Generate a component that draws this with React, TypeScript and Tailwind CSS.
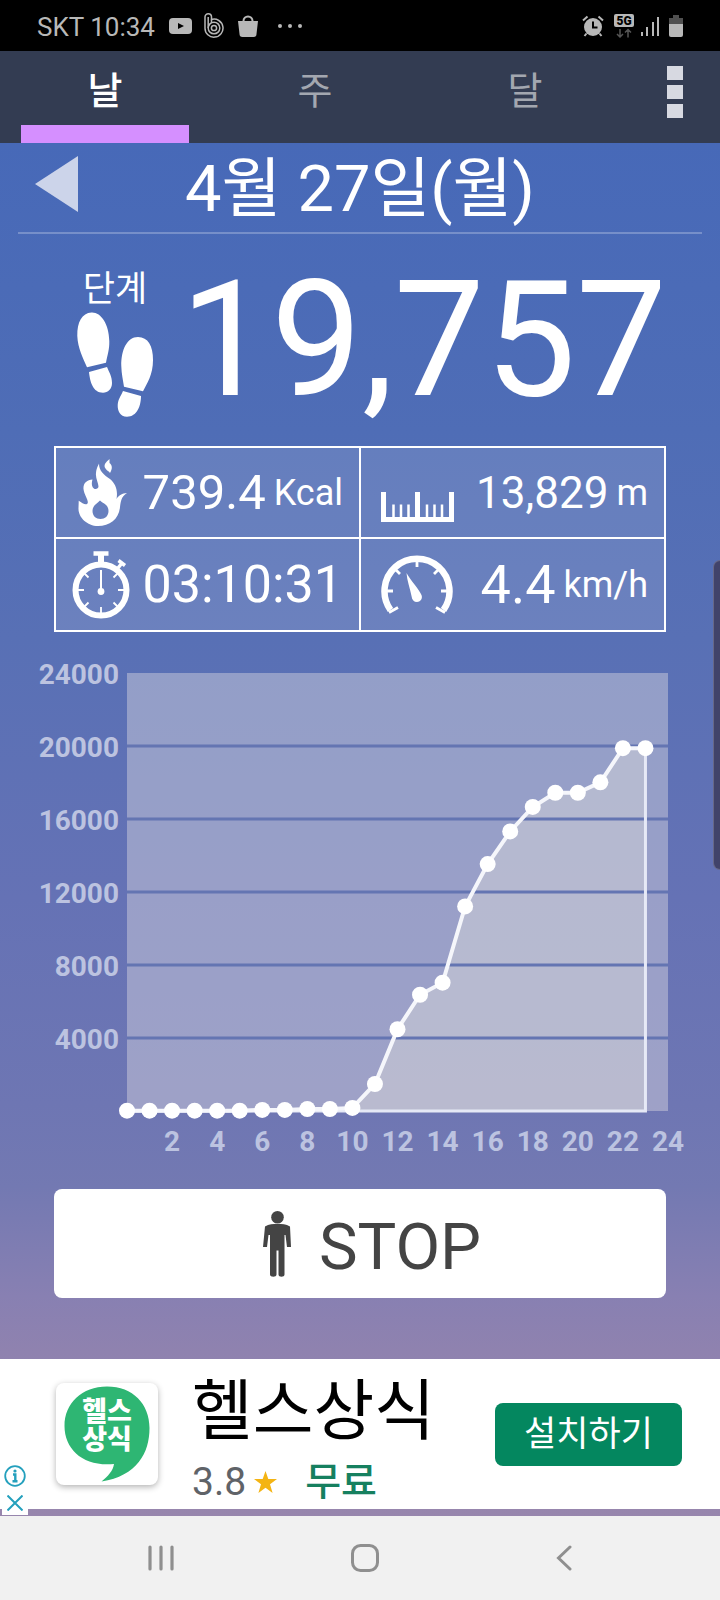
import { useState } from 'react';
// Pedometer day view: status bar, tabs, step summary, hourly chart, ad banner, nav bar

const TABS = ['날', '주', '달'];

// Running step total at each hour of the day
const HOURLY_STEPS = [
  20, 20, 20, 20, 20, 20, 60, 60, 110, 110, 170, 1480, 4480, 6370, 7030, 11210,
  13530, 15320, 16660, 17440, 17440, 18010, 19880, 19880,
];
const MAX_STEPS = 24000;
const Y_LABELS = [24000, 20000, 16000, 12000, 8000, 4000];
const X_LABELS = [2, 4, 6, 8, 10, 12, 14, 16, 18, 20, 22, 24];

const PLOT = { left: 127, right: 668, top: 23, bottom: 461 };

const xAt = (hour: number) => PLOT.left + (hour / 24) * (PLOT.right - PLOT.left);
const yAt = (steps: number) => PLOT.bottom - (steps / MAX_STEPS) * (PLOT.bottom - PLOT.top);

function StatusBar() {
  return (
    <div className="flex h-[51px] items-center justify-between bg-black px-[37px] text-[#b8b8b8]">
      <div className="flex items-center">
        <span className="pt-[2px] text-[26px] leading-8">SKT 10:34</span>
        <svg className="ml-[14px] h-4 w-[23px]" viewBox="0 0 23 16">
          <rect width="23" height="16" rx="4" fill="currentColor" />
          <path d="M9 5l6 3-6 3z" fill="#000" />
        </svg>
        <svg className="ml-3 h-[25px] w-5" viewBox="0 0 20 25" fill="none" stroke="currentColor" strokeWidth="1.5">
          <path d="M1 15V4a3 3 0 0 1 6.5 0v2.5A9 9 0 1 1 1 15z" />
          <path d="M4.2 15V4M7.5 6.5V10" />
          <circle cx="10" cy="15" r="5.8" />
          <circle cx="10" cy="15" r="2.6" />
        </svg>
        <svg className="ml-[14px] h-[22px] w-5" viewBox="0 0 20 22">
          <path d="M0 6h20l-1.5 13a3 3 0 0 1-3 3h-11a3 3 0 0 1-3-3z" fill="currentColor" />
          <path d="M5.5 9V6a4.5 4.5 0 0 1 9 0v3" fill="none" stroke="currentColor" strokeWidth="2" />
        </svg>
        <svg className="ml-5 h-1 w-6" viewBox="0 0 24 4" fill="currentColor">
          <circle cx="2" cy="2" r="2" />
          <circle cx="12" cy="2" r="2" />
          <circle cx="22" cy="2" r="2" />
        </svg>
      </div>
      <div className="flex items-center">
        <svg className="h-[22px] w-[22px]" viewBox="0 0 22 22" fill="none" stroke="currentColor" strokeWidth="2">
          <circle cx="11" cy="12" r="9" fill="currentColor" stroke="none" />
          <path d="M1 5.5L5.5 1.5M21 5.5L16.5 1.5M4.5 18.5L2.5 21M17.5 18.5l2 2.5" />
          <path d="M11 6.5v6h4.5" stroke="#000" />
        </svg>
        <svg className="ml-[10px] h-6 w-5" viewBox="0 0 20 24">
          <rect width="20" height="13" rx="2" fill="currentColor" />
          <text x="10" y="11" textAnchor="middle" fontSize="12" fontWeight="900" fill="#000">5G</text>
          <path d="M6 15v8M3 20l3 3 3-3M14 23.5v-8M11 18.5l3-3 3 3" fill="none" stroke="#555" strokeWidth="1.5" />
        </svg>
        <svg className="ml-[7px] h-5 w-[18px]" viewBox="0 0 18 20" stroke="currentColor" strokeWidth="2">
          <path d="M1 20v-4M6 20V11M12 20V6M17 20V1" />
        </svg>
        <svg className="ml-[10px] h-[22px] w-[14px]" viewBox="0 0 14 22">
          <path d="M4 0h6v3h4v6H0V3h4z" fill="#505050" />
          <path d="M0 9h14v11a2 2 0 0 1-2 2H2a2 2 0 0 1-2-2z" fill="currentColor" />
        </svg>
      </div>
    </div>
  );
}

function TabBar() {
  const [active, setActive] = useState(0);

  return (
    <div className="grid h-[92px] grid-cols-[7fr_7fr_7fr_3fr] bg-[#333c52]">
      {TABS.map((tab, i) => (
        <button
          key={tab}
          onClick={() => setActive(i)}
          className={`flex flex-col items-center justify-between text-[38px] ${
            i === active ? 'font-medium text-white' : 'text-[#a3a7b0]'
          }`}
        >
          <span className="pt-[14px] leading-[52px]">{tab}</span>
          <span className={`h-[18px] w-4/5 ${i === active ? 'bg-[#d58fff]' : ''}`} />
        </button>
      ))}
      <button aria-label="메뉴" className="flex flex-col items-center gap-[5px] pt-[15px]">
        <span className="h-[14px] w-4 bg-[#d7d9e1]" />
        <span className="h-[14px] w-4 bg-[#d7d9e1]" />
        <span className="h-[14px] w-4 bg-[#d7d9e1]" />
      </button>
    </div>
  );
}

function DateHeader() {
  return (
    <header className="mx-[18px] grid h-[91px] grid-cols-[60px_1fr_60px] items-center border-b-2 border-white/25">
      <button aria-label="이전 날" className="flex pb-2 pl-[17px]">
        <svg className="h-14 w-[43px]" viewBox="0 0 43 56">
          <path d="M43 0v56L0 28z" fill="#ccd4ea" />
        </svg>
      </button>
      <h1 className="whitespace-nowrap pt-[2px] text-center text-[65px] leading-[80px]">4월 27일(월)</h1>
    </header>
  );
}

function StepCount() {
  return (
    <section className="flex h-[212px] items-start justify-between pl-[77px] pr-[53px] pt-[32px]">
      <div className="flex flex-col items-center pt-[2px]">
        <h2 className="text-[35px] leading-[44px]">단계</h2>
        <svg className="h-[106px] w-[76px]" viewBox="0 0 76 106" fill="#fff">
          <path d="M14.5 0.5C5 1 0 10 0.3 24C0.8 36 6 46 10 55.3L29 50.7C30.5 42 32.5 38 32.3 29C32 12 24 0 14.5 0.5z" />
          <path d="M12 60L30 55C32 60 35 64 35 71C35 77 31 80.7 26 80.7C16 80.7 13 70 12 60z" />
          <path d="M61 25C50 25 44 38 44.3 54C44.5 62 46 68 47 74.7L66 79.3C70 71 76 63 76 48C76 34 71 25 61 25z" />
          <path d="M46 79L64 84C64 94 60 104.7 50 104.7C43 104.7 40.5 99 40.7 93C41 87 44 84 46 79z" />
        </svg>
      </div>
      <p className="text-[162px] leading-[148px]">19,757</p>
    </section>
  );
}

function FlameIcon() {
  return (
    <svg className="h-[67px] w-[49px]" viewBox="0 0 49 67" fill="currentColor" fillRule="evenodd">
      <path d="M20 67C9 67 0 58 0.5 49C0.6 46 0.7 44 0.7 41.7C4 44 7 46 9 45C12 43 6 36 5.5 30C5 24 9 21 14.5 20.5C13 25 14 30 18 30C24 29 17 21 18 14C18.5 9 20 7 21 4.5C21 12 26 16 32 20C38 25 40 32 38.5 40C41 36 44 34.5 49 34C43 38 43 42 42 48C41 60 32 67 20 67zM22 41.5C20 44 14.5 46 14.5 52C14.5 57 18 60 22.5 60C27 60 30.5 57 30.5 52C30.5 46 26 45 22 41.5z" />
      <path d="M31.5 0C28 3 25 6 27.5 9.5C29 12 31 12 32 14C35 9 34 6 31.5 4z" />
    </svg>
  );
}

function RulerIcon() {
  return (
    <svg className="h-[30px] w-[73px]" viewBox="0 0 73 30" fill="none" stroke="currentColor">
      <path d="M2.5 0v27.5h68V0M36.5 0v27" strokeWidth="5" />
      <path d="M12.5 12.5V25M20 12.5V25M27.5 12.5V25M46 12.5V25M53.5 12.5V25M61 12.5V25" strokeWidth="2.5" />
    </svg>
  );
}

function StopwatchIcon() {
  return (
    <svg className="h-[68px] w-[58px]" viewBox="0 0 58 68" fill="none" stroke="currentColor">
      <circle cx="29" cy="39" r="25.5" strokeWidth="6" />
      <path d="M21.5 2.5h15" strokeWidth="4.5" />
      <path d="M29 3v9" strokeWidth="6" />
      <path d="M46 17l4-5M46.5 9.5l6.5 5" strokeWidth="3.5" />
      <path d="M29 39V19" strokeWidth="2" />
      <path
        d="M6 39h6M46 39h6M29 56v6M12.5 22.5l4 4M45.5 22.5l-4 4M12.5 55.5l4-4M45.5 55.5l-4-4"
        strokeWidth="1.8"
      />
      <circle cx="29" cy="40.5" r="3.4" fill="currentColor" stroke="none" />
    </svg>
  );
}

function GaugeIcon() {
  return (
    <svg className="h-[59px] w-[72px]" viewBox="0 0 72 59" fill="none" stroke="currentColor">
      <path d="M9.5 55A32.5 32.5 0 1 1 62.5 55" strokeWidth="6.5" />
      <path d="M8 57.5l9-5M64 57.5l-9-5M6 36h6M60 36h6M36 5v7M14 14l5 5M58 14l-5 5" strokeWidth="2.8" />
      <path d="M25.5 18C30 26 38 34 40.5 40C42 44 39 47 36 47C33 47 31 45 30.5 41C29 33 26 26 25.5 18z" fill="currentColor" stroke="none" />
    </svg>
  );
}

function Stats() {
  return (
    <section className="mx-[54px] grid grid-cols-2 grid-rows-[89px_91px] gap-[2px] whitespace-nowrap border-2 border-white leading-none *:flex *:items-center *:bg-white/12 *:pr-4 *:outline-2 *:outline-white">
      <div className="pl-[22px]">
        <FlameIcon />
        <span className="ml-auto text-[49px]">739.4</span>
        <span className="ml-2 text-[36px]">Kcal</span>
      </div>
      <div className="pl-5">
        <span className="pt-7">
          <RulerIcon />
        </span>
        <span className="ml-auto text-[44px]">13,829</span>
        <span className="ml-2 text-[36px]">m</span>
      </div>
      <div className="pl-4">
        <StopwatchIcon />
        <span className="ml-auto text-[52px]">03:10:31</span>
      </div>
      <div className="pl-5">
        <GaugeIcon />
        <span className="ml-auto text-[54px]">4.4</span>
        <span className="ml-2 text-[36px]">km/h</span>
      </div>
    </section>
  );
}

function StepChart() {
  const last = HOURLY_STEPS.length - 1;
  const line = HOURLY_STEPS.map((steps, hour) => `${xAt(hour)},${yAt(steps)}`).join(' ');
  const closing = `${xAt(last)},${yAt(HOURLY_STEPS[last])} ${xAt(last)},${PLOT.bottom} ${PLOT.left},${PLOT.bottom}`;

  return (
    <svg className="mt-[18px] w-full" viewBox="0 0 720 522">
      <rect
        x={PLOT.left}
        y={PLOT.top}
        width={PLOT.right - PLOT.left}
        height={PLOT.bottom - PLOT.top}
        fill="#d9d7e1"
        fillOpacity="0.45"
      />
      <polygon points={`${line} ${closing}`} fill="#d9d9d9" fillOpacity="0.45" />
      {Y_LABELS.slice(1).map(v => (
        <path key={v} d={`M${PLOT.left} ${yAt(v)}H${PLOT.right}`} stroke="#6475b2" strokeWidth="3" />
      ))}
      <polyline points={closing} fill="none" stroke="#e6e9f6" strokeWidth="3" />
      <polyline points={line} fill="none" stroke="#f5f6fb" strokeWidth="4" />
      {HOURLY_STEPS.map((steps, hour) => (
        <circle key={hour} cx={xAt(hour)} cy={yAt(steps)} r="8" fill="#fff" />
      ))}
      <g fontSize="28" fontWeight="700" fill="#bcc3e0">
        {Y_LABELS.map(v => (
          <text key={v} x="119" y={yAt(v) + 11} textAnchor="end">{v}</text>
        ))}
        {X_LABELS.map(v => (
          <text key={v} x={xAt(v)} y="501" textAnchor="middle">{v}</text>
        ))}
      </g>
    </svg>
  );
}

function StopButton() {
  return (
    <div className="px-[54px] pt-[17px]">
      <button className="flex h-[109px] w-full items-center justify-center gap-7 rounded-lg bg-white pl-6 text-[65px] leading-none text-[#444]">
        <svg className="h-[66px] w-7" viewBox="0 0 28 66" fill="currentColor">
          <circle cx="14.5" cy="6.3" r="6.3" />
          <path d="M2 15.5C6 13 10 13 14.5 13C19 13 23 13 27 15.5L28 36H24L22.5 24H21.5V63.5C21.5 66.5 15.5 66.5 15.5 63.5V39.5H13.5V63.5C13.5 66.5 7 66.5 7 63.5V24H5.5L4 36H0z" />
        </svg>
        <span className="pt-2">STOP</span>
      </button>
    </div>
  );
}

function AdBanner() {
  return (
    <aside className="relative mt-[61px] flex h-[150px] items-center bg-white pl-14 pr-[38px]">
      <div className="h-[102px] w-[102px] shrink-0 rounded-lg bg-white shadow-[0_2px_6px_rgba(0,0,0,0.3)]">
        <svg className="h-full w-full" viewBox="0 0 102 102">
          <path
            d="M51 3.5C77 3.5 93.5 21 93.5 45C93.5 70 81 93 45.5 98.5C52 93 57 88 58 81C28 84 8.5 67 8.5 43C8.5 20 26 3.5 51 3.5z"
            fill="#2eb673"
          />
          <text fontSize="27" fontWeight="900" fill="#fff" textAnchor="middle">
            <tspan x="51" y="38">헬스</tspan>
            <tspan x="51" y="66">상식</tspan>
          </text>
        </svg>
      </div>
      <div className="ml-[34px] whitespace-nowrap pt-5">
        <p className="text-[66px] leading-[76px] text-black">헬스상식</p>
        <p className="flex items-center text-[39px] leading-[64px] text-[#5f6368]">
          3.8
          <svg className="ml-2 h-[22px] w-[23px]" viewBox="0 0 23 22" fill="#f4b413">
            <path d="M11.5 0l2.8 8H23l-7 5.2L18.600 22l-7.100-5.200L4.400 22 7 13.200 0 8h8.700z" />
          </svg>
          <span className="ml-7 font-medium text-[#16805f]">무료</span>
        </p>
      </div>
      <button className="ml-auto h-[63px] w-[187px] rounded-lg bg-[#04875f] text-[35px] leading-none text-white">
        설치하기
      </button>
      <div className="absolute -bottom-[6px] left-[2px] flex w-[26px] flex-col items-center gap-2 bg-white pb-1">
        <svg className="h-[22px] w-[22px]" viewBox="0 0 22 22" fill="none" stroke="#24a0bd" strokeWidth="1.8">
          <circle cx="11" cy="11" r="9.8" />
          <path d="M9 9.5h2.3V16M8.5 16.2h5" strokeWidth="2.4" />
          <circle cx="11" cy="6" r="1.6" fill="#24a0bd" stroke="none" />
        </svg>
        <svg className="h-4 w-4" viewBox="0 0 16 16" stroke="#24a0bd" strokeWidth="2">
          <path d="M0.5 0.5l15 15M15.5 0.5l-15 15" />
        </svg>
      </div>
    </aside>
  );
}

function NavBar() {
  return (
    <nav className="flex h-[84px] items-center justify-around bg-[#f1f1f1] px-[60px] text-[#8f8f8f]">
      <button aria-label="최근 앱">
        <svg className="h-[26px] w-[26px]" viewBox="0 0 26 26" stroke="currentColor" strokeWidth="3.2" strokeLinecap="round">
          <path d="M2 2v22M13 2v22M24 2v22" />
        </svg>
      </button>
      <button aria-label="홈">
        <svg className="h-7 w-7" viewBox="0 0 28 28" fill="none" stroke="currentColor" strokeWidth="3">
          <rect x="1.5" y="1.5" width="25" height="25" rx="8" />
        </svg>
      </button>
      <button aria-label="뒤로">
        <svg className="h-[26px] w-4" viewBox="0 0 16 26" fill="none" stroke="currentColor" strokeWidth="3" strokeLinecap="round">
          <path d="M14 2L2.5 13 14 24" />
        </svg>
      </button>
    </nav>
  );
}

export default function App() {
  return (
    <div className="flex min-h-screen flex-col bg-[#f1f1f1] font-['Roboto','Noto_Sans_CJK_KR',sans-serif] text-white">
      <StatusBar />
      <TabBar />
      <main className="relative bg-[linear-gradient(#4769b8_0%,#4f6db6_21%,#5870b5_36%,#6572b5_55%,#6e76b3_70%,#7379b2_76%,#8880b2_84%,#8f82af_88%,#9786ad_100%)] pb-[7px]">
        <DateHeader />
        <StepCount />
        <Stats />
        <StepChart />
        <StopButton />
        <AdBanner />
        {/* Edge panel handle */}
        <div className="absolute right-0 top-[417px] h-[310px] w-[7px] rounded-l-lg border border-r-0 border-white/20 bg-[#41436a]" />
      </main>
      <NavBar />
    </div>
  );
}
